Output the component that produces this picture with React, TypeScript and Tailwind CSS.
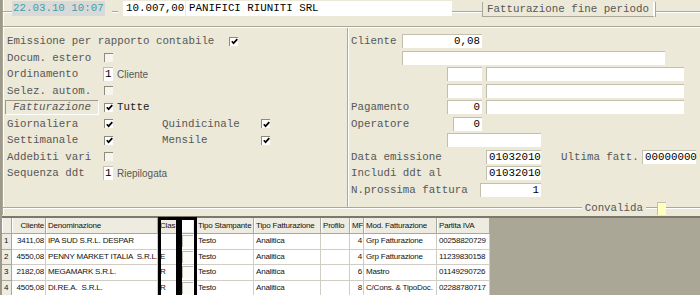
import clsx from 'clsx'
import type { ReactNode } from 'react'

const sans = "font-['Liberation_Sans',Arial,sans-serif]"

function Etch({ className }: { className?: string }) {
  return <div className={clsx('h-[2px] border-y border-t-[#aca899] border-b-white', className)} />
}

function Check({ on }: { on?: boolean }) {
  return (
    <div
      className={clsx(
        'flex h-[9px] w-[9px] shrink-0 items-center justify-center border-t border-l border-[#8e8b7c]',
        on ? 'bg-white' : 'bg-[#f6f5ef]'
      )}
    >
      {on && (
        <svg width="7" height="7" viewBox="0 0 7 7">
          <path d="M0.8 3.2 L2.6 5.2 L6.3 1.2" stroke="#000" strokeWidth="1.7" fill="none" />
        </svg>
      )}
    </div>
  )
}

function Field({ className, right, children }: { className: string; right?: boolean; children?: ReactNode }) {
  return (
    <div
      className={clsx(
        'h-[14px] shrink-0 border-t border-l border-[#c2bfae] bg-white px-[2px] leading-[13px] text-black',
        right && 'text-right',
        className
      )}
    >
      {children}
    </div>
  )
}

function Row({ children }: { children: ReactNode }) {
  return <div className="flex h-[16.5px] items-center whitespace-pre">{children}</div>
}

const cols = [
  { w: 'w-[10px]', label: '' },
  { w: 'w-[34px]', label: 'Cliente', right: true },
  { w: 'w-[112px]', label: 'Denominazione' },
  { w: 'w-[20px]', label: 'Clas' },
  { w: 'w-[18px]', label: '', box: true },
  { w: 'w-[58px]', label: 'Tipo Stampante' },
  { w: 'w-[67px]', label: 'Tipo Fatturazione' },
  { w: 'w-[29px]', label: 'Profilo' },
  { w: 'w-[14px]', label: 'MF', right: true },
  { w: 'w-[73px]', label: 'Mod. Fatturazione' },
  { w: 'w-[53px]', label: 'Partita IVA' },
]

const rows = [
  ['1', '3411,08', 'IPA SUD S.R.L. DESPAR', '', '', 'Testo', 'Analitica', '', '4', 'Grp Fatturazione', '00258820729'],
  ['2', '4550,08', 'PENNY MARKET ITALIA  S.R.L.', 'E', '', 'Testo', 'Analitica', '', '4', 'Grp Fatturazione', '11239830158'],
  ['3', '2182,08', 'MEGAMARK S.R.L.', 'R', '', 'Testo', 'Analitica', '', '6', 'Mastro', '01149290726'],
  ['4', '4505,08', 'DI.RE.A.  S.R.L.', 'R', '', 'Testo', 'Analitica', '', '8', 'C/Cons. & TipoDoc.', '02288780717'],
]

export default function App() {
  return (
    <div className="flex h-[295px] w-[700px] flex-col overflow-hidden border-l-2 border-[#9d9a8c] bg-[#ece9d8] font-['Liberation_Mono',monospace] text-[10.8px] text-[#575757]">
      <div className="border-l border-[#aca899] shadow-[inset_1px_0_0_#fff]">
        {/* title bar */}
        <div className="flex h-[26px] items-start">
          <Etch className="mt-[11px] w-[9px] shrink-0" />
          <div className="mt-[1px] h-[15px] w-[93px] shrink-0 bg-[#d9d9d9] pl-[1px] leading-[15px] text-[#3f9ea6]">
            22.03.10 10:07
          </div>
          <Etch className="mt-[11px] ml-[7px] mr-[5px] w-[6px] shrink-0" />
          <div className="mt-[1px] h-[15px] w-[62px] shrink-0 bg-white pl-[3px] leading-[15px] text-black">10.007,00</div>
          <div className="mt-[1px] ml-[1px] h-[15px] w-[266px] shrink-0 bg-white pl-[3px] leading-[15px] text-black">
            PANIFICI RIUNITI SRL
          </div>
          <Etch className="mt-[11px] w-[30px] shrink-0" />
          <div className="mt-[2px] h-[15px] w-[173px] shrink-0 border-b border-l border-[#aca899] border-r-2 border-r-white text-center leading-[14px] shadow-[1px_0_0_#aca899]">
            Fatturazione fine periodo
          </div>
          <Etch className="mt-[11px] ml-[1px] flex-1" />
        </div>
        <Etch />

        {/* panels */}
        <div className="flex h-[180px]">
          <div className="w-[345px] shrink-0 border-r border-[#aca899] pt-[5px] pl-[4px]">
            <Row>
              <span className="w-[222px] shrink-0">Emissione per rapporto contabile</span>
              <Check on />
            </Row>
            <Row>
              <span className="w-[97px] shrink-0">Docum. estero</span>
              <Check />
            </Row>
            <Row>
              <span className="w-[96px] shrink-0">Ordinamento</span>
              <Field className="w-[10px] !px-[1px]">1</Field>
              <span className={clsx(sans, 'ml-[4px] text-[10px]')}>Cliente</span>
            </Row>
            <Row>
              <span className="w-[97px] shrink-0">Selez. autom.</span>
              <Check />
            </Row>
            <Row>
              <div className="-ml-[2px] h-[14px] w-[93px] shrink-0 border-t border-l border-[#9d9a8c] text-center italic leading-[13px] shadow-[1px_1px_0_#fff]">
                Fatturazione
              </div>
              <div className="ml-[6px]">
                <Check on />
              </div>
              <span className="ml-[4px] text-[#222]">Tutte</span>
            </Row>
            <Row>
              <span className="w-[97px] shrink-0">Giornaliera</span>
              <Check on />
              <span className="ml-[49px] w-[99px] shrink-0">Quindicinale</span>
              <Check on />
            </Row>
            <Row>
              <span className="w-[97px] shrink-0">Settimanale</span>
              <Check on />
              <span className="ml-[49px] w-[99px] shrink-0">Mensile</span>
              <Check on />
            </Row>
            <Row>
              <span className="w-[97px] shrink-0">Addebiti vari</span>
              <Check />
            </Row>
            <Row>
              <span className="w-[96px] shrink-0">Sequenza ddt</span>
              <Field className="w-[10px] !px-[1px]">1</Field>
              <span className={clsx(sans, 'ml-[4px] text-[10px]')}>Riepilogata</span>
            </Row>
          </div>

          <div className="flex-1 pt-[5px] pl-[3px] shadow-[inset_1px_0_0_#fff]">
            <Row>
              <span className="w-[51px] shrink-0">Cliente</span>
              <Field className="w-[80px]" right>
                0,08
              </Field>
            </Row>
            <Row>
              <Field className="ml-[51px] w-[263px]" />
            </Row>
            <Row>
              <Field className="ml-[96px] w-[35px]" />
              <Field className="ml-[4px] w-[198px]" />
            </Row>
            <Row>
              <Field className="ml-[96px] w-[35px]" />
              <Field className="ml-[4px] w-[198px]" />
            </Row>
            <Row>
              <span className="w-[96px] shrink-0">Pagamento</span>
              <Field className="w-[35px]" right>
                0
              </Field>
              <Field className="ml-[4px] w-[198px]" />
            </Row>
            <Row>
              <span className="w-[102px] shrink-0">Operatore</span>
              <Field className="w-[29px]" right>
                0
              </Field>
            </Row>
            <Row>
              <Field className="ml-[96px] w-[94px]" />
            </Row>
            <Row>
              <span className="w-[135px] shrink-0">Data emissione</span>
              <Field className="w-[55px]">01032010</Field>
              <span className="ml-[20px] w-[81px] shrink-0">Ultima fatt.</span>
              <Field className="w-[54px]">00000000</Field>
            </Row>
            <Row>
              <span className="w-[135px] shrink-0">Includi ddt al</span>
              <Field className="w-[55px]">01032010</Field>
            </Row>
            <Row>
              <span className="w-[129px] shrink-0">N.prossima fattura</span>
              <Field className="w-[61px]" right>
                1
              </Field>
            </Row>
          </div>
        </div>

        {/* convalida line */}
        <div className="-mt-[7px] flex h-[14px] items-center">
          <Etch className="flex-1" />
          <span className="px-[3px] leading-[14px]">Convalida</span>
          <Etch className="w-[11px] shrink-0" />
          <div className="h-[13px] w-[9px] shrink-0 border-t border-l border-[#c2bfae] bg-[#ffffc0]" />
          <Etch className="w-[34px] shrink-0" />
        </div>
      </div>

      {/* grid */}
      <div
        className={clsx(
          sans,
          'relative mt-[1px] flex-1 border-t-2 border-[#7b786c] bg-[#aba797] text-[8px] tracking-[-0.2px] text-[#111]'
        )}
      >
        <div className="flex h-[16px] w-[488px]">
          {cols.map((c, i) => (
            <div
              key={i}
              className={clsx(
                c.w,
                'shrink-0 overflow-hidden whitespace-pre border-r border-b border-[#aca899] bg-[#eeece1] px-[2px] leading-[15px] shadow-[inset_1px_0_0_#fff]',
                c.right && 'text-right !pr-[1px]'
              )}
            >
              {c.box ? <div className="mt-[1px] ml-[2px] h-[13px] w-[11px] bg-white" /> : c.label}
            </div>
          ))}
        </div>
        {rows.map((r) => (
          <div key={r[0]} className="flex h-[15.5px] w-[488px]">
            {r.map((v, i) => (
              <div
                key={i}
                className={clsx(
                  cols[i].w,
                  'shrink-0 overflow-hidden whitespace-pre border-r border-b px-[2px] leading-[14.5px]',
                  i === 0 ? 'border-[#aca899] bg-[#eeece1]' : 'border-[#d0cec4] bg-white',
                  cols[i].right && 'text-right !pr-[1px]'
                )}
              >
                {cols[i].box ? (
                  <div className="mt-[1px] ml-[2px] h-[12px] w-[11px] border-t border-l border-[#bdbab0] bg-[#fbfbf8]" />
                ) : (
                  v
                )}
              </div>
            ))}
          </div>
        ))}
        <div className="absolute top-[-1px] left-[156px] h-[90px] w-[21px] border-[3px] border-black" />
        <div className="absolute top-[-1px] left-[177px] h-[90px] w-[18px] border-[3px] border-black" />
      </div>
    </div>
  )
}
